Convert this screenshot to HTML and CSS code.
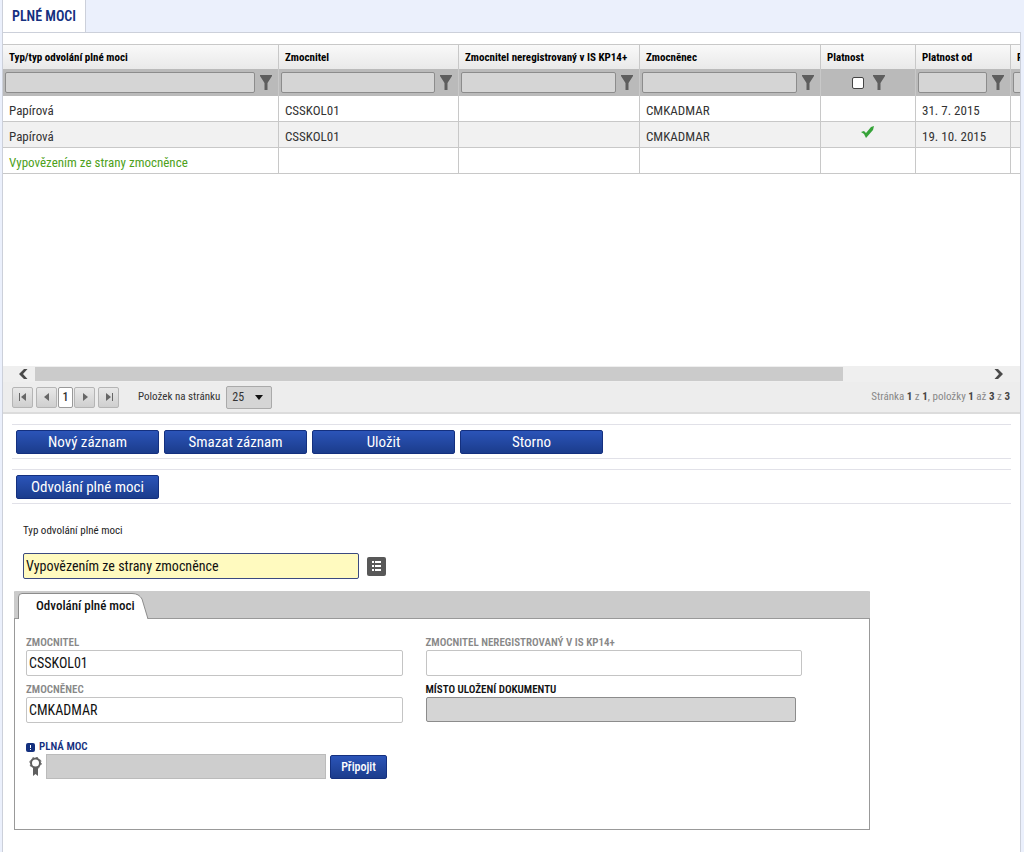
FILE: index.html
```html
<!DOCTYPE html>
<html lang="cs">
<head>
<meta charset="utf-8">
<title>Plné moci</title>
<link rel="stylesheet" href="styles.css">
</head>
<body>
<svg class="sprite" width="0" height="0" aria-hidden="true">
  <symbol id="funnel" viewBox="0 0 12 15"><path d="M0 0h12v1L7.500 8V15h-3V8L0 1z" fill="#5e5e5e"/></symbol>
</svg>
<div class="page">
  <nav class="tabs"><a class="tab" href="#plne-moci">PLNÉ MOCI</a></nav>
  <main class="panel" id="plne-moci">
    <section class="grid">
      <div class="grid-scroll">
        <table class="table">
          <colgroup><col class="c-type"><col class="c-name-first"><col class="c-name"><col class="c-name"><col class="c-date"><col class="c-date"><col class="c-date"></colgroup>
          <thead>
            <tr class="head"><th scope="col">Typ/typ odvolání plné moci</th><th scope="col">Zmocnitel</th><th scope="col">Zmocnitel neregistrovaný v IS KP14+</th><th scope="col">Zmocněnec</th><th scope="col">Platnost</th><th scope="col">Platnost od</th><th scope="col">Platnost do</th></tr>
            <tr class="filters">
              <td><div class="filter"><input type="text" aria-label="Filtr typ"><button type="button" aria-label="Filtrovat typ"><svg><use href="#funnel"/></svg></button></div></td>
              <td><div class="filter"><input type="text" aria-label="Filtr zmocnitel"><button type="button" aria-label="Filtrovat zmocnitele"><svg><use href="#funnel"/></svg></button></div></td>
              <td><div class="filter"><input type="text" aria-label="Filtr zmocnitel neregistrovaný"><button type="button" aria-label="Filtrovat neregistrované"><svg><use href="#funnel"/></svg></button></div></td>
              <td><div class="filter"><input type="text" aria-label="Filtr zmocněnec"><button type="button" aria-label="Filtrovat zmocněnce"><svg><use href="#funnel"/></svg></button></div></td>
              <td><div class="filter filter-check"><input type="checkbox" aria-label="Filtr platnost"><button type="button" aria-label="Filtrovat platnost"><svg><use href="#funnel"/></svg></button></div></td>
              <td><div class="filter"><input type="text" aria-label="Filtr platnost od"><button type="button" aria-label="Filtrovat platnost od"><svg><use href="#funnel"/></svg></button></div></td>
              <td><div class="filter"><input type="text" aria-label="Filtr platnost do"><button type="button" aria-label="Filtrovat platnost do"><svg><use href="#funnel"/></svg></button></div></td>
            </tr>
          </thead>
          <tbody>
            <tr><td>Papírová</td><td>CSSKOL01</td><td></td><td>CMKADMAR</td><td></td><td>31. 7. 2015</td><td></td></tr>
            <tr class="alt"><td>Papírová</td><td>CSSKOL01</td><td></td><td>CMKADMAR</td><td class="valid"><svg class="tick" viewBox="0 0 13 12" role="img" aria-label="Platná"><path d="M0 6l3-1 2 2 5-6 3-1-1 4-7 8L3 8z" fill="#36a339"/></svg></td><td>19. 10. 2015</td><td></td></tr>
            <tr class="revoked"><td>Vypovězením ze strany zmocněnce</td><td></td><td></td><td></td><td></td><td></td><td></td></tr>
          </tbody>
        </table>
      </div>
      <div class="scrollbar">
        <button type="button" aria-label="Posunout vlevo"><svg width="10" height="12" viewBox="0 0 10 12"><path d="M6 1h3.500L5 6l4.500 5H6L1 6z" fill="#4a4a4a"/></svg></button>
        <div class="track"><div class="thumb"></div></div>
        <button type="button" aria-label="Posunout vpravo"><svg width="10" height="12" viewBox="0 0 10 12"><path d="M4 1H.500L5 6 .500 11H4l5-5z" fill="#4a4a4a"/></svg></button>
      </div>
      <div class="pager">
        <div class="pages">
          <button class="step" type="button" aria-label="První"><svg viewBox="0 0 8 8"><path d="M0 0h1v8H0zM7 0v8L2 4z"/></svg></button>
          <div class="near">
            <button class="step" type="button" aria-label="Předchozí"><svg viewBox="0 0 8 8"><path d="M6 0v8L1 4z"/></svg></button>
            <button class="current" type="button">1</button>
            <button class="step" type="button" aria-label="Další"><svg viewBox="0 0 8 8"><path d="M2 0v8l5-4z"/></svg></button>
          </div>
          <button class="step" type="button" aria-label="Poslední"><svg viewBox="0 0 8 8"><path d="M7 0h1v8H7zM1 0v8l5-4z"/></svg></button>
        </div>
        <label for="per-page">Položek na stránku</label>
        <div class="select">
          <select id="per-page"><option>25</option></select>
          <svg width="8" height="5" viewBox="0 0 8 5" aria-hidden="true"><path d="M0 0h8L4 5z" fill="#111"/></svg>
        </div>
        <p class="summary">Stránka <b>1</b> z <b>1</b>, položky <b>1</b> až <b>3</b> z <b>3</b></p>
      </div>
    </section>
    <div class="toolbar">
      <button class="btn" type="button">Nový záznam</button>
      <button class="btn" type="button">Smazat záznam</button>
      <button class="btn" type="button">Uložit</button>
      <button class="btn" type="button">Storno</button>
    </div>
    <div class="toolbar"><button class="btn" type="button">Odvolání plné moci</button></div>
    <form class="form">
      <label class="type-label" for="type">Typ odvolání plné moci</label>
      <div class="type-row">
        <input class="text required" id="type" type="text" value="Vypovězením ze strany zmocněnce">
        <button class="list-btn" type="button" aria-label="Vybrat ze seznamu"><svg width="19" height="18" viewBox="0 0 19 18"><path d="M5 4h2v2H5zM8 4h6v2H8zM5 8h2v2H5zM8 8h6v2H8zM5 12h2v2H5zM8 12h6v2H8z" fill="#fff"/></svg></button>
      </div>
      <section class="card">
        <header class="card-head">
          <svg class="card-tab-shape" width="131" height="26" viewBox="0 0 131 26" aria-hidden="true"><path d="M.500 26V4Q.500 .500 4 .500H114Q121 .500 124 6L130 26" fill="#fff" stroke="#8c8c8c"/></svg>
          <h2>Odvolání plné moci</h2>
        </header>
        <div class="card-body">
          <div class="fields">
            <div class="field"><label for="f1">ZMOCNITEL</label><input class="text" id="f1" type="text" value="CSSKOL01"></div>
            <div class="field"><label for="f2">ZMOCNITEL NEREGISTROVANÝ V IS KP14+</label><input class="text" id="f2" type="text"></div>
            <div class="field"><label for="f3">ZMOCNĚNEC</label><input class="text" id="f3" type="text" value="CMKADMAR"></div>
            <div class="field place"><label for="f4">MÍSTO ULOŽENÍ DOKUMENTU</label><input class="text" id="f4" type="text"></div>
          </div>
          <div class="file">
            <label class="file-label" for="f5"><svg width="9" height="9" viewBox="0 0 9 9" aria-hidden="true"><rect width="9" height="9" rx="2" fill="#14307f"/><path d="M4 2h1v3H4zM4 6h1v1H4z" fill="#fff"/></svg>PLNÁ MOC</label>
            <div class="file-row">
              <svg class="seal" width="13" height="19" viewBox="0 0 13 19" aria-hidden="true"><circle cx="6.500" cy="6" r="4.500" fill="none" stroke="#5f5f5f" stroke-width="2"/><circle cx="6.500" cy="6" r="5.700" fill="none" stroke="#5f5f5f" stroke-width="1" stroke-dasharray="2 2.480"/><path d="M4 11h5v8l-2.500-2L4 19z" fill="#5f5f5f"/></svg>
              <input class="file-input" id="f5" type="text">
              <button class="btn btn-small" type="button">Připojit</button>
            </div>
          </div>
        </div>
      </section>
    </form>
  </main>
</div>
</body>
</html>
```
FILE: styles.css
```css
* { box-sizing: border-box; }
body {
  margin: 0;
  background: #ebf0fc;
  color: #333;
  font: 13px/18px "Roboto Condensed", "Liberation Sans Narrow", Roboto, sans-serif;
}
button, input, select { font: inherit; color: inherit; margin: 0; }
button { padding: 0; border: 0; background: none; display: inline-flex; align-items: center; justify-content: center; }
h2, p { margin: 0; }
.sprite { display: block; }
.page { display: flex; flex-direction: column; min-height: 100vh; padding: 0 3px 0 2px; }
.tabs { display: flex; height: 32px; }
.tab {
  padding: 0 9px;
  background: #fff;
  border: solid #ccd0da;
  border-width: 0 1px;
  color: #14307f;
  font-size: 14px;
  font-weight: 600;
  line-height: 32px;
  text-decoration: none;
}
.panel { flex: 1; min-width: 0; padding-top: 11px; background: #fff; border: 1px solid #ccd0da; border-bottom: 0; }

.grid-scroll { height: 322px; overflow: hidden; border-top: 1px solid #c8c8c8; }
.table { width: 1103px; table-layout: fixed; border-collapse: separate; border-spacing: 0; }
.c-type { width: 276px; }
.c-name-first { width: 180px; }
.c-name { width: 181px; }
.c-date { width: 95px; }
.table th, .table td { padding: 0 6px; border-right: 1px solid #c8c8c8; text-align: left; white-space: nowrap; }
.table th { height: 24px; padding-top: 2px; background: linear-gradient(#f9f9f9, #e9e9e9); color: #000; font-size: 11px; font-weight: 700; }
.table tbody td { height: 26px; padding-top: 4px; border-bottom: 1px solid #c8c8c8; }
.table .filters td { height: 27px; padding: 0 2px; background: #bababa; }
.filter { display: flex; align-items: center; }
.filter input[type="text"] { flex: 1; min-width: 0; height: 21px; padding: 0 4px; background: #d5d5d5; border: 1px solid #8c8c8c; border-radius: 2px; }
.filter button { width: 21px; height: 21px; }
.filter svg { width: 12px; height: 15px; }
.filter-check { justify-content: center; gap: 5px; padding-left: 5px; }
.filter-check input { appearance: none; width: 12px; height: 12px; background: #fff; border: 1px solid #444; border-radius: 2px; }
.alt td { background: #f1f1f1; }
.revoked td { color: #4ea11b; }
.table tbody .valid { padding: 0 8px 2px 6px; text-align: center; }
.tick { width: 13px; height: 12px; }

.scrollbar { display: flex; height: 16px; padding: 0 9px 0 7px; background: #efefef; }
.scrollbar button { width: 25px; }
.track { flex: 1; padding: 1px 0; }
.thumb { width: 85%; height: 14px; background: #cbcbcb; }
.pager { display: flex; align-items: center; height: 32px; padding: 0 10px 0 9px; background: #ededed; border-bottom: 2px solid #dcdcdc; font-size: 11px; }
.pages { display: flex; gap: 3px; margin-right: 19px; }
.near { display: flex; gap: 1px; }
.step { width: 21px; height: 21px; border: 1px solid #b5b5b5; border-radius: 2px; background: linear-gradient(#e8e8e8, #cfcfcf); }
.step svg { width: 8px; height: 8px; fill: #666; }
.current { width: 15px; height: 21px; background: #fff; border: 1px solid #999; border-radius: 2px; font-size: 12px; font-weight: 500; }
.select { position: relative; margin-left: 6px; }
.select select { appearance: none; display: block; width: 46px; height: 23px; padding: 0 5px; border: 1px solid #aaa; border-radius: 2px; background: #d5d5d5; font-size: 12px; }
.select svg { position: absolute; right: 9px; top: 9px; pointer-events: none; }
.summary { margin-left: auto; color: #888; }
.summary b { color: #444; }

.toolbar { display: flex; gap: 5px; margin: 10px 9px 0; padding: 5px 4px 4px; border: solid #e1e1e8; border-width: 1px 0; }
.btn { width: 143px; height: 24px; border: 1px solid #14307f; border-radius: 2px; background: linear-gradient(#2b54b8, #1b3c8c); color: #fff; font-size: 15px; }
.btn-small { width: 57px; font-size: 12px; font-weight: 500; }

.form { padding: 18px 11px 23px; }
.type-label { display: block; margin-left: 9px; color: #222; font-size: 11px; }
.type-row { display: flex; align-items: center; gap: 8px; margin: 13px 0 12px 9px; }
.text { display: block; width: 100%; height: 26px; padding: 0 2px; border: 1px solid #c4c4c4; border-radius: 2px; background: #fff; color: #111; font-size: 14px; }
.required { width: 336px; background: #fffabf; border-color: #3b4a80; }
.list-btn { width: 19px; height: 19px; background: #585858; border-radius: 2px; }
.card { max-width: 856px; border: 1px solid #999; border-top: 0; border-radius: 2px 2px 0 0; background: #fff; }
.card-head { position: relative; height: 28px; margin: 0 -1px; padding: 6px 22px; border-bottom: 1px solid #999; border-radius: 2px 2px 0 0; background: #cbcbcb; }
.card-tab-shape { position: absolute; left: 4px; bottom: -1px; }
.card-head h2 { position: relative; color: #111; font-size: 13px; line-height: 18px; font-weight: 500; }
.card-body { padding: 17px 67px 50px 11px; }
.fields { display: grid; grid-template-columns: 1fr 1fr; gap: 7px 23px; }
.field label, .file-label { display: block; color: #888; font-size: 11px; line-height: 14px; font-weight: 600; }
.place { padding-right: 6px; }
.place label { color: #111; }
.place .text { height: 25px; background: #d5d5d5; border-color: #8c8c8c; }
.file { margin-top: 17px; }
.file-label { display: flex; align-items: center; gap: 4px; color: #14307f; }
.file-row { display: flex; align-items: center; }
.seal { margin: 0 4px 0 3px; }
.file-input { width: 280px; height: 25px; margin-right: 4px; border: 1px solid #bbb; background: #cecece; }
```
